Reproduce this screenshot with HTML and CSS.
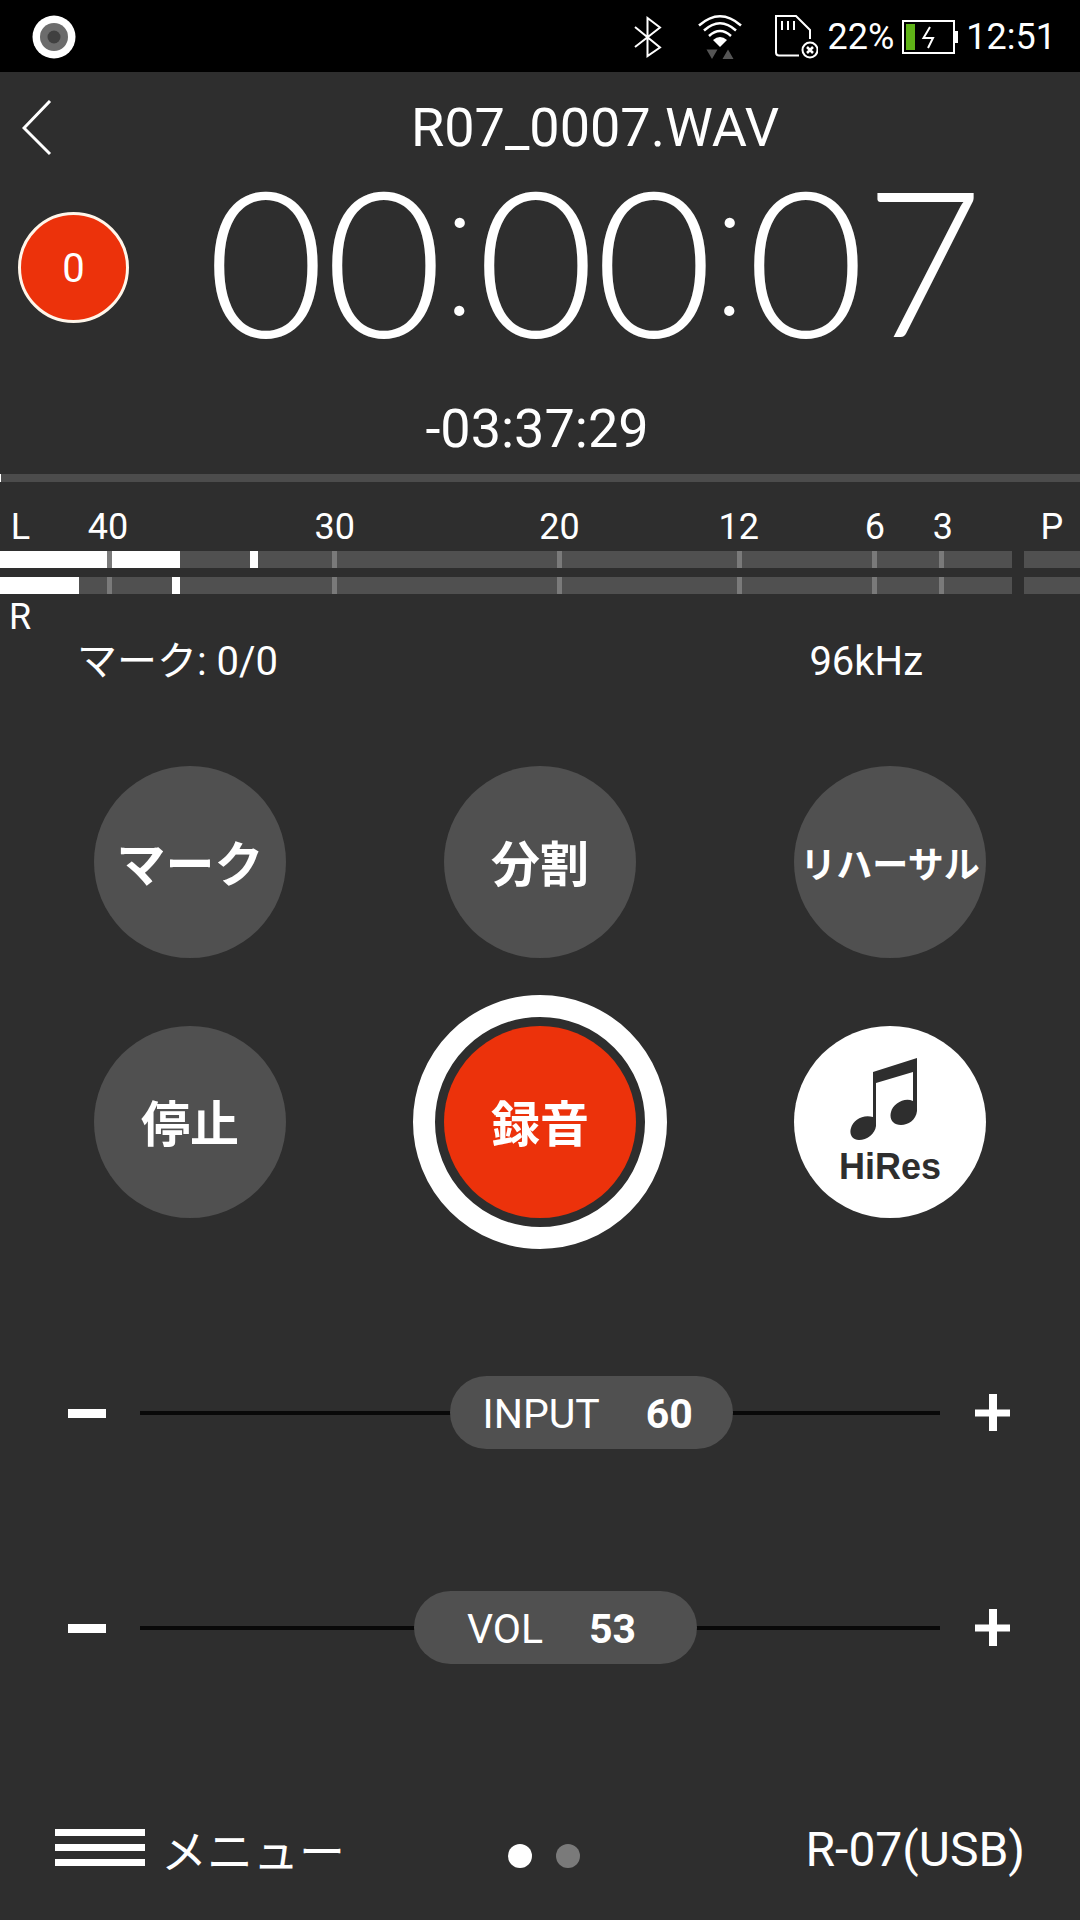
FILE: index.html
```html
<!DOCTYPE html>
<html lang="ja">
<head>
<meta charset="utf-8">
<meta name="viewport" content="width=device-width, initial-scale=1">
<title>R07_0007.WAV</title>
<link rel="stylesheet" href="styles.css">
</head>
<body>
<div class="status">
  <svg class="status-app" viewBox="0 0 44 44" aria-hidden="true"><circle cx="22" cy="22" r="21.5" fill="#fff"/><circle cx="22" cy="22" r="14" fill="#6c6c6c"/><circle cx="22" cy="22" r="6.5" fill="#404040"/></svg>
  <svg class="icon-bluetooth" viewBox="0 0 28 42" aria-hidden="true"><path d="M1 11 26 31.500 13.500 40V2L26 11.500 1 31" fill="none" stroke="#fff" stroke-width="2"/></svg>
  <svg class="icon-wifi" viewBox="0 0 44 46" aria-hidden="true">
    <g fill="none" stroke="#fff" stroke-width="2.500"><path d="M1 11.500Q22-7 43 11.500"/><path d="M6 16.500Q22 2 38 16.500"/><path d="M11 22Q22 12 33 22"/></g>
    <path d="M15 26Q22 20 29 26L22 33Z" fill="#fff"/><path d="M8.500 35.500h11L14 45ZM24.500 45h11L30 35.500Z" fill="#555"/>
  </svg>
  <svg class="icon-sd" viewBox="0 0 44 46" aria-hidden="true">
    <g fill="none" stroke="#fff" stroke-width="2"><path d="M25 41.500H5Q2 41.500 2 38.500V2H22L36 16V25"/><path d="M8 7v9M14 7v9M20 7v9"/><circle cx="36" cy="36" r="7.500"/><path d="M33 33l6 6M39 33l-6 6" stroke-width="2.500"/></g>
  </svg>
  <span class="status-percent">22%</span>
  <svg class="icon-battery" viewBox="0 0 56 34" aria-hidden="true"><rect x="1" y="1" width="51" height="32" fill="none" stroke="#fff" stroke-width="2"/><path d="M53 11h3v12h-3z" fill="#fff"/><path d="M4 4h9v26H4z" fill="#5fb317"/><path d="M28 7 21.500 18H31L26 28" fill="none" stroke="#fff" stroke-width="2"/></svg>
  <span>12:51</span>
</div>

<main class="app">
  <header class="titlebar">
    <button class="back" type="button" aria-label="戻る"><svg viewBox="0 0 30 56" aria-hidden="true"><path d="M28 1 2 28 28 54" fill="none" stroke="#fff" stroke-width="3"/></svg></button>
    <h1 class="filename">R07_0007.WAV</h1>
  </header>

  <section class="clock">
    <span class="badge">0</span>
    <div class="timer"><span class="digit">0</span><span class="digit">0</span><span class="colon">:</span><span class="digit">0</span><span class="digit">0</span><span class="colon">:</span><span class="digit">0</span><span class="digit">7</span></div>
  </section>
  <p class="remaining">-03:37:29</p>
  <div class="progress"></div>

  <section class="levels">
    <div class="scale">
      <span class="mark" style="left:1.9%">L</span><span class="mark" style="left:10%">40</span><span class="mark" style="left:31%">30</span><span class="mark" style="left:51.8%">20</span><span class="mark" style="left:68.4%">12</span><span class="mark" style="left:81%">6</span><span class="mark" style="left:87.3%">3</span><span class="mark" style="left:97.4%">P</span>
    </div>
    <div class="meter">
      <div class="bar"><i class="fill" style="width:17.8%"></i><i class="peak" style="left:24.7%"></i><i class="tick" style="left:10.6%"></i><i class="tick" style="left:32.8%"></i><i class="tick" style="left:55%"></i><i class="tick" style="left:72.8%"></i><i class="tick" style="left:86.2%"></i><i class="tick" style="left:92.8%"></i></div>
      <div class="clip"></div>
      <div class="bar"><i class="fill" style="width:7.8%"></i><i class="peak" style="left:17%"></i><i class="tick" style="left:10.6%"></i><i class="tick" style="left:32.8%"></i><i class="tick" style="left:55%"></i><i class="tick" style="left:72.8%"></i><i class="tick" style="left:86.2%"></i><i class="tick" style="left:92.8%"></i></div>
      <div class="clip"></div>
    </div>
    <p class="channel">R</p>
  </section>

  <div class="info"><span>マーク: 0/0</span><span>96kHz</span></div>

  <section class="pads">
    <button class="pad" type="button">マーク</button>
    <button class="pad" type="button">分割</button>
    <button class="pad pad-small" type="button">リハーサル</button>
    <button class="pad" type="button">停止</button>
    <button class="pad pad-record" type="button">録音</button>
    <button class="pad pad-hires" type="button">
      <svg viewBox="0 0 68 84" aria-hidden="true"><path d="M23 14 67 0V53C66 62 58 67 51 67 43 67 39 61 41 54 43 46 54 39 63 43V14L26 25V68C25 76 17 82 9 82 2 82-1 76 1 70 3 62 13 56 23 59Z" fill="#2e2e2e"/></svg>
      <span>HiRes</span>
    </button>
  </section>

  <section class="sliders">
    <div class="slider">
      <button class="step" type="button" aria-label="INPUT −"><svg viewBox="0 0 38 38" aria-hidden="true"><path d="M0 15h38v9H0z" fill="#fff"/></svg></button>
      <div class="track" style="--value:0.6">
        <input id="input-level" type="range" min="0" max="100" value="60">
        <label class="thumb-label" for="input-level"><span>INPUT</span><b>60</b></label>
      </div>
      <button class="step" type="button" aria-label="INPUT +"><svg viewBox="0 0 38 38" aria-hidden="true"><path d="M1 15.500h14V0h8v15.500h13v7H23V37h-8V22.500H1z" fill="#fff"/></svg></button>
    </div>
    <div class="slider">
      <button class="step" type="button" aria-label="VOL −"><svg viewBox="0 0 38 38" aria-hidden="true"><path d="M0 15h38v9H0z" fill="#fff"/></svg></button>
      <div class="track" style="--value:0.53">
        <input id="volume" type="range" min="0" max="100" value="53">
        <label class="thumb-label" for="volume"><span>VOL</span><b>53</b></label>
      </div>
      <button class="step" type="button" aria-label="VOL +"><svg viewBox="0 0 38 38" aria-hidden="true"><path d="M1 15.500h14V0h8v15.500h13v7H23V37h-8V22.500H1z" fill="#fff"/></svg></button>
    </div>
  </section>

  <footer class="footer">
    <button class="menu" type="button"><svg viewBox="0 0 90 38" aria-hidden="true"><path d="M0 0h90v7H0zM0 15h90v7H0zM0 30h90v7H0z" fill="#fff"/></svg><span>メニュー</span></button>
    <div class="pager"><i class="dot dot-on"></i><i class="dot"></i></div>
    <span class="device">R-07(USB)</span>
  </footer>
</main>
</body>
</html>
```
FILE: styles.css
```css
* { box-sizing: border-box; }
html, body { margin: 0; }
body {
  min-height: 100vh;
  display: flex;
  flex-direction: column;
  background: #2e2e2e;
  color: #fff;
  font-family: Roboto, "Noto Sans CJK JP", sans-serif;
}
button {
  border: 0;
  padding: 0;
  background: none;
  color: inherit;
  font: inherit;
}
svg { display: block; flex: none; }
p, h1 { margin: 0; }

.status {
  display: flex;
  align-items: center;
  height: 72px;
  padding: 2px 24px 0 32px;
  background: #000;
  font-size: 36px;
  line-height: 42px;
}
.status-app { width: 44px; height: 44px; margin-right: auto; }
.icon-bluetooth { width: 28px; height: 42px; margin-right: 36px; }
.icon-wifi { width: 44px; height: 46px; margin-right: 32px; }
.icon-sd { width: 44px; height: 46px; margin-right: 10px; }
.icon-battery { width: 56px; height: 34px; margin: 0 8px; }

.app { flex: 1; display: flex; flex-direction: column; }

.titlebar { display: flex; align-items: center; height: 112px; padding-right: 37px; }
.back { width: 147px; height: 112px; padding-left: 22px; }
.back svg { width: 30px; height: 56px; }
.filename { flex: 1; text-align: center; font-size: 54px; line-height: 64px; font-weight: 400; }

.clock { display: flex; align-items: center; height: 167px; padding: 0 37px 0 18px; }
.badge {
  width: 111px;
  height: 111px;
  margin-right: 18px;
  border: 3px solid #fff6ea;
  border-radius: 50%;
  background: #ec320b;
  text-align: center;
  font-size: 40px;
  line-height: 107px;
}
.timer {
  flex: 1;
  display: flex;
  justify-content: center;
  align-items: center;
  padding-bottom: 20px;
  font-family: Lato, Roboto, sans-serif;
  font-size: 204px;
  font-weight: 300;
  line-height: 160px;
}
.digit { width: 118px; display: flex; justify-content: center; }
.colon {
  width: 34px;
  display: flex;
  justify-content: center;
  padding-bottom: 14px;
  font-family: Roboto, sans-serif;
  font-size: 188px;
  font-weight: 100;
}
.remaining { margin-top: 46px; padding-right: 6px; text-align: center; font-size: 54px; line-height: 64px; }
.progress { height: 8px; margin-top: 13px; background: #4c4c4c; border-left: 1px solid #fff; }

.levels { font-size: 36px; line-height: 42px; }
.scale { position: relative; height: 69px; }
.mark { position: absolute; top: 24px; transform: translateX(-50%); }
.meter { display: grid; grid-template-columns: 1fr 56px; gap: 9px 12px; }
.bar, .clip { position: relative; height: 17px; background: #505050; }
.fill { display: block; height: 100%; background: #fff; }
.peak, .tick { position: absolute; top: 0; bottom: 0; }
.peak { width: 8px; background: #fff; }
.tick { width: 5px; background: #7a7a7a; }
.channel { margin-top: 2px; padding-left: 9px; }

.info {
  display: flex;
  justify-content: space-between;
  padding: 0 157px 0 77px;
  font-size: 40px;
  line-height: 48px;
}

.pads {
  display: grid;
  grid-template-columns: repeat(3, 192px);
  justify-content: space-between;
  row-gap: 68px;
  margin-top: 80px;
  padding: 0 94px;
}
.pad {
  position: relative;
  width: 192px;
  height: 192px;
  padding-top: 8px;
  border-radius: 50%;
  background: #505050;
  font-size: 49px;
  font-weight: 700;
  line-height: 56px;
  white-space: nowrap;
}
.pad-small { font-size: 36px; }
.pad-record { background: #ec320b; }
.pad-record::before {
  content: "";
  position: absolute;
  inset: -31px;
  border: 22px solid #fff;
  border-radius: 50%;
}
.pad-hires {
  display: flex;
  flex-direction: column;
  align-items: center;
  padding-top: 32px;
  background: #fff;
  color: #2e2e2e;
  font-family: "Liberation Sans", sans-serif;
  font-size: 36px;
  line-height: 42px;
}
.pad-hires svg { width: 68px; height: 84px; margin: 0 12px 4px 0; }

.sliders { display: grid; gap: 142px; margin-top: 158px; padding: 0 68px; }
.slider { display: flex; align-items: center; gap: 34px; }
.step svg { width: 38px; height: 38px; }
.track { position: relative; flex: 1; height: 73px; }
.track input {
  -webkit-appearance: none;
  appearance: none;
  display: block;
  width: 100%;
  height: 73px;
  margin: 0;
  background: linear-gradient(#090909, #090909) center / 100% 4px no-repeat;
}
.track input::-webkit-slider-thumb {
  -webkit-appearance: none;
  width: 283px;
  height: 73px;
  border-radius: 37px;
  background: #505050;
}
.thumb-label {
  position: absolute;
  top: 0;
  left: calc((100% - 283px) * var(--value));
  width: 283px;
  height: 73px;
  display: flex;
  justify-content: center;
  align-items: center;
  gap: 46px;
  padding: 2px 8px 0 0;
  font-size: 41px;
  line-height: 48px;
  pointer-events: none;
}

.footer {
  display: grid;
  grid-template-columns: 1fr auto 1fr;
  align-items: center;
  margin-top: auto;
  padding: 0 55px 38px;
  line-height: 56px;
}
.menu { display: flex; align-items: center; gap: 16px; font-size: 46px; }
.menu svg { width: 90px; height: 38px; margin-bottom: 8px; }
.pager { display: flex; gap: 24px; padding: 8px 0 0 8px; }
.dot { width: 24px; height: 24px; border-radius: 50%; background: #7a7a7a; }
.dot-on { background: #fff; }
.device { justify-self: end; padding-bottom: 4px; font-size: 48px; }
```
